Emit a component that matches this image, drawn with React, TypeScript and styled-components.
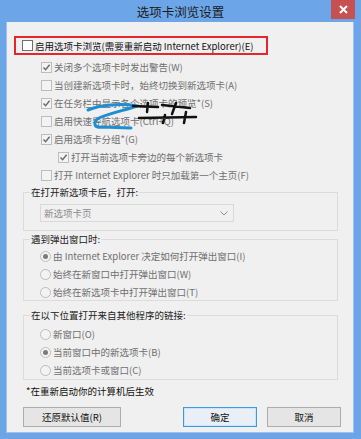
import React from 'react';
import styled, { createGlobalStyle } from 'styled-components';

const Global = createGlobalStyle`
  html, body { margin: 0; padding: 0; background: #6DA6E8; }
  body { font-family: "Noto Sans CJK SC", "Noto Sans", sans-serif; font-size: 9.5px; }
  * { box-sizing: border-box; }
`;

const Window = styled.div`
  position: relative;
  width: 361px;
  height: 439px;
  background: #6DA6E8;
  display: flex;
  flex-direction: column;
  overflow: hidden;
`;

const TitleBar = styled.div`
  height: 22px;
  display: grid;
  grid-template-columns: 1fr auto 1fr;
  align-items: start;
`;

const Title = styled.div`
  grid-column: 2;
  line-height: 23px;
  font-size: 12.5px;
  color: #1a1a1a;
`;

const Close = styled.div`
  grid-column: 3;
  justify-self: end;
  margin-right: 6px;
  width: 24px;
  height: 19px;
  background: #C75050;
  display: flex;
  align-items: center;
  justify-content: center;
`;

const Body = styled.div`
  margin: 0 7px 0 6px;
  height: 411px;
  background: #F0F0F0;
  border: 1px solid #9EC0EA;
  border-top: none;
  padding-top: 14px;
  display: flex;
  flex-direction: column;
`;

const Highlight = styled.div`
  margin-left: 7px;
  width: 254px;
  height: 19px;
  border: 2px solid #E5262D;
  display: flex;
  align-items: center;
  padding-left: 6px;
  gap: 2px;
  color: #111;
  font-size: 9.5px;
  white-space: nowrap;
`;

const Box = styled.span<{ $disabled?: boolean }>`
  flex: none;
  width: 11px;
  height: 11px;
  border: 1px solid ${p => (p.$disabled ? '#BDBDBD' : '#6E6E6E')};
  background: ${p => (p.$disabled ? '#F3F3F3' : '#FFFFFF')};
  display: flex;
  align-items: center;
  justify-content: center;
`;

const Radio = styled.span`
  flex: none;
  width: 11px;
  height: 11px;
  border-radius: 50%;
  border: 1px solid #BDBDBD;
  background: #F3F3F3;
  display: flex;
  align-items: center;
  justify-content: center;
`;

const Dot = styled.span`
  width: 5px;
  height: 5px;
  border-radius: 50%;
  background: #7A7A7A;
`;

const List = styled.div`
  margin-top: 3px;
  display: flex;
  flex-direction: column;
`;

const Row = styled.div<{ $indent: number }>`
  height: 18px;
  display: flex;
  align-items: center;
  gap: 2px;
  padding-left: ${p => p.$indent}px;
  color: #6F6F6F;
  font-size: 9.5px;
  white-space: nowrap;
`;

const Group = styled.fieldset<{ $h: number; $mt?: number }>`
  margin: ${p => p.$mt ?? 0}px 15px 0 16px;
  padding: 0 0 0 6px;
  height: ${p => p.$h}px;
  border: 1px solid #DCDCDC;
  min-width: 0;
`;

const Legend = styled.legend`
  padding: 0 1px;
  font-size: 9.5px;
  line-height: 16px;
  color: #222;
`;

const GroupInner = styled.div<{ $top: number }>`
  padding: ${p => p.$top}px 0 0 10px;
  display: flex;
  flex-direction: column;
`;

const Select = styled.div`
  width: 194px;
  height: 18px;
  border: 1px solid #D9D9D9;
  background: #F0F0F0;
  color: #8C8C8C;
  display: flex;
  align-items: center;
  justify-content: space-between;
  padding: 0 5px 0 3px;
  font-size: 9.5px;
`;

const Note = styled.div`
  margin: 2px 0 0 19px;
  height: 18px;
  line-height: 18px;
  color: #111;
  font-size: 9.5px;
`;

const Buttons = styled.div`
  margin-top: 7px;
  display: flex;
  padding-left: 16px;
`;

const Button = styled.div<{ $w: number; $focus?: boolean; $ml?: number }>`
  width: ${p => p.$w}px;
  height: 20px;
  margin-left: ${p => p.$ml ?? 0}px;
  border: 1px solid ${p => (p.$focus ? '#3C9BE0' : '#ADADAD')};
  background: ${p => (p.$focus ? '#E8EFF7' : '#E5E5E5')};
  box-shadow: ${p => (p.$focus ? 'inset 0 0 0 1px #CFE3F6' : 'none')};
  display: flex;
  align-items: center;
  justify-content: center;
  color: #111;
  font-size: 9.5px;
`;

const Scribble = styled.svg`
  position: absolute;
  left: 0;
  top: 0;
  pointer-events: none;
`;

const Check = () => (
  <svg width="9" height="9" viewBox="0 0 9 9">
    <path d="M1.5 4.6 L3.6 6.8 L7.6 1.8" fill="none" stroke="#6A6A6A" strokeWidth="1.4" />
  </svg>
);

const CB = ({ checked, disabled = true }: { checked?: boolean; disabled?: boolean }) => (
  <Box $disabled={disabled}>{checked && <Check />}</Box>
);

const RB = ({ on }: { on?: boolean }) => <Radio>{on && <Dot />}</Radio>;

const rows: { t: string; c?: boolean; i?: number }[] = [
  { t: '关闭多个选项卡时发出警告(W)', c: true },
  { t: '当创建新选项卡时，始终切换到新选项卡(A)' },
  { t: '在任务栏中显示各个选项卡的预览*(S)', c: true },
  { t: '启用快速导航选项卡(Ctrl+Q)' },
  { t: '启用选项卡分组*(G)', c: true },
  { t: '打开当前选项卡旁边的每个新选项卡', c: true, i: 51 },
  { t: '打开 Internet Explorer 时只加载第一个主页(F)' },
];

export default function App() {
  return (
    <>
      <Global />
      <Window>
        <TitleBar>
          <Title>选项卡浏览设置</Title>
          <Close>
            <svg width="9" height="9" viewBox="0 0 9 9">
              <path d="M1 1 L8 8 M8 1 L1 8" stroke="#fff" strokeWidth="2" />
            </svg>
          </Close>
        </TitleBar>
        <Body>
          <Highlight>
            <CB disabled={false} />
            <span>启用选项卡浏览(需要重新启动 Internet Explorer)(E)</span>
          </Highlight>
          <List>
            {rows.map(r => (
              <Row key={r.t} $indent={r.i ?? 34}>
                <CB checked={r.c} />
                <span>{r.t}</span>
              </Row>
            ))}
          </List>
          <Group $h={47}>
            <Legend>在打开新选项卡后，打开:</Legend>
            <GroupInner $top={4}>
              <Select>
                <span>新选项卡页</span>
                <svg width="8" height="5" viewBox="0 0 8 5">
                  <path d="M0.5 0.5 L4 4 L7.5 0.5" fill="none" stroke="#8C8C8C" strokeWidth="1" />
                </svg>
              </Select>
            </GroupInner>
          </Group>
          <Group $h={70}>
            <Legend>遇到弹出窗口时:</Legend>
            <GroupInner $top={0}>
              <Row $indent={0}><RB on /><span>由 Internet Explorer 决定如何打开弹出窗口(I)</span></Row>
              <Row $indent={0}><RB /><span>始终在新窗口中打开弹出窗口(W)</span></Row>
              <Row $indent={0}><RB /><span>始终在新选项卡中打开弹出窗口(T)</span></Row>
            </GroupInner>
          </Group>
          <Group $h={73} $mt={6}>
            <Legend>在以下位置打开来自其他程序的链接:</Legend>
            <GroupInner $top={2}>
              <Row $indent={0}><RB /><span>新窗口(O)</span></Row>
              <Row $indent={0}><RB on /><span>当前窗口中的新选项卡(B)</span></Row>
              <Row $indent={0}><RB /><span>当前选项卡或窗口(C)</span></Row>
            </GroupInner>
          </Group>
          <Note>*在重新启动你的计算机后生效</Note>
          <Buttons>
            <Button $w={98}>还原默认值(R)</Button>
            <Button $w={74} $focus $ml={62}>确定</Button>
            <Button $w={74} $ml={10}>取消</Button>
          </Buttons>
        </Body>
        <Scribble width="361" height="439" viewBox="0 0 361 439">
          <path
            d="M88 110 C100 105, 120 103, 137 106 C126 110, 106 114, 97 119 C93 124, 95 128, 101 127 L131 128"
            fill="none"
            stroke="#1E8ED2"
            strokeWidth="3"
            strokeLinecap="round"
          />
          <path
            d="M133 106 L158 107 M148 103 L147 112 M162 105 L190 108 M176 103 L172 114 M139 118 L196 117 M186 112 L184 123 M165 115 L163 123"
            fill="none"
            stroke="#111"
            strokeWidth="2.5"
            strokeLinecap="round"
          />
        </Scribble>
      </Window>
    </>
  );
}
